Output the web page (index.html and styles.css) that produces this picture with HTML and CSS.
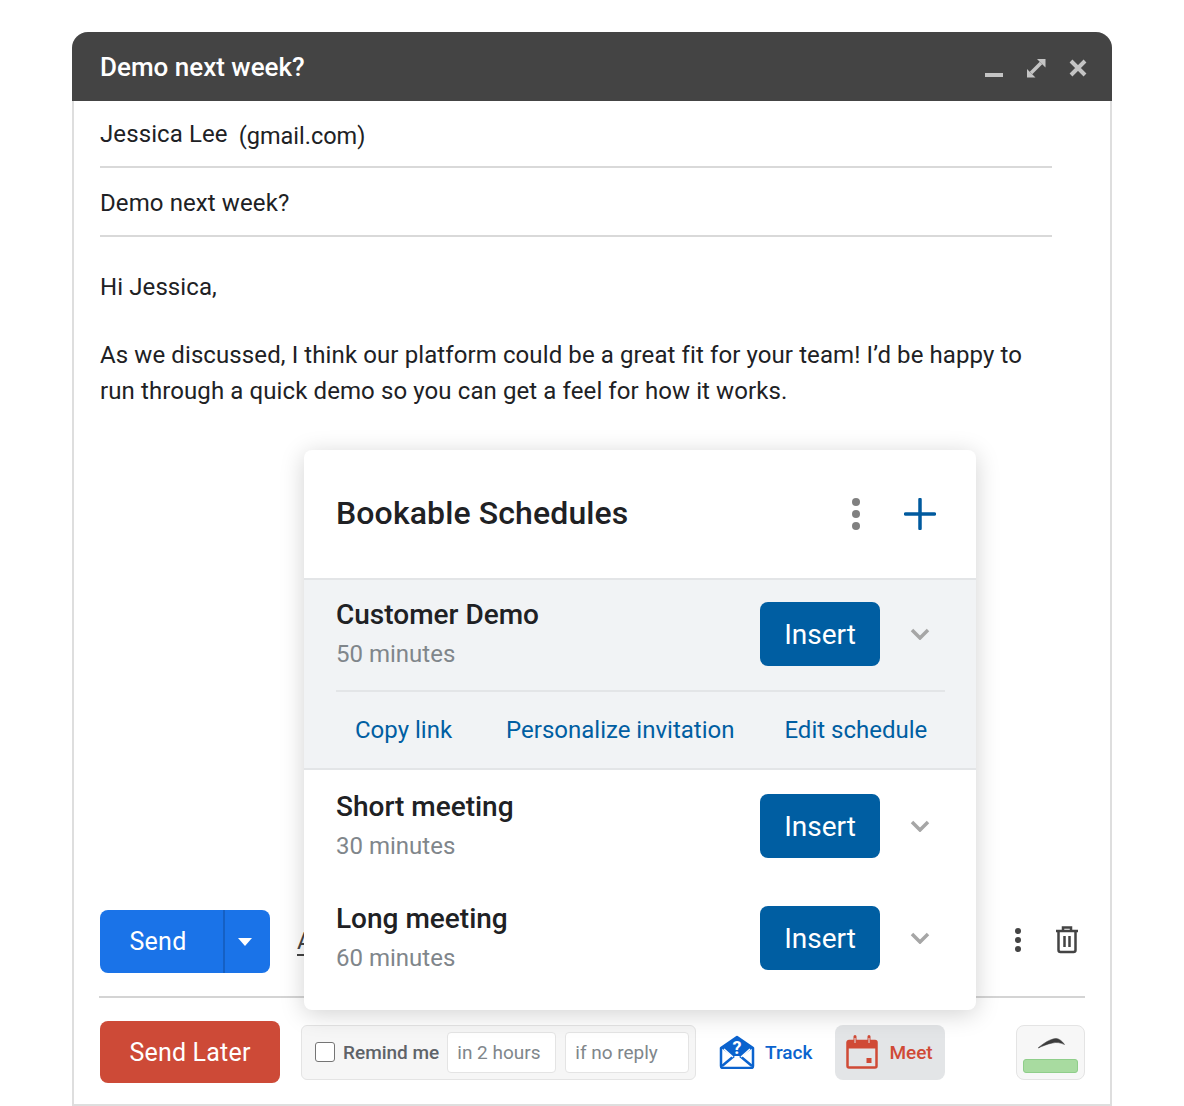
FILE: index.html
```html
<!DOCTYPE html>
<html lang="en">
<head>
<meta charset="utf-8">
<title>Demo next week?</title>
<link rel="stylesheet" href="styles.css">
</head>
<body>
<main class="compose">
  <header class="titlebar">
    <h1 class="titlebar-text">Demo next week?</h1>
    <div class="window-controls">
      <svg class="wc" width="24" height="24" viewBox="0 0 24 24"><rect x="3" y="17" width="18" height="4" fill="#c4c4c4"/></svg>
      <svg class="wc" width="24" height="24" viewBox="0 0 24 24"><path d="M7 17L17 7" stroke="#c4c4c4" stroke-width="3.500"/><path d="M13 3h8.500v8.500zM3 13v8.500h8.500z" fill="#c4c4c4"/></svg>
      <svg class="wc" width="24" height="24" viewBox="0 0 24 24"><path d="M5 5l14 14M19 5L5 19" stroke="#c4c4c4" stroke-width="4" fill="none"/></svg>
    </div>
  </header>
  <div class="field field-to"><span>Jessica Lee</span><span class="domain">(gmail.com)</span></div>
  <div class="field field-subject">Demo next week?</div>
  <div class="message">
    <p>Hi Jessica,</p>
    <p>As we discussed, I think our platform could be a great fit for your team! I’d be happy to run through a quick demo so you can get a feel for how it works.</p>
  </div>
  <footer class="footer">
    <div class="toolbar">
      <div class="send-split">
        <span class="send-main">Send</span>
        <span class="send-more"><svg width="14" height="8" viewBox="0 0 14 8"><path d="M0 0h14L7 8z" fill="#fff"/></svg></span>
      </div>
      <span class="format-a">A</span>
      <div class="toolbar-right">
        <svg width="8" height="26" viewBox="0 0 8 26"><circle cx="4" cy="4" r="3" fill="#444"/><circle cx="4" cy="13" r="3" fill="#444"/><circle cx="4" cy="22" r="3" fill="#444"/></svg>
        <svg width="24" height="28" viewBox="0 0 24 28"><path d="M1 5h22M8 4V1.500h8V4" stroke="#444" stroke-width="2.500" fill="none"/><path d="M3.500 5.500v18.500a2 2 0 0 0 2 2h13a2 2 0 0 0 2-2V5.500" stroke="#444" stroke-width="2.500" fill="none"/><path d="M9.500 10v11M14.500 10v11" stroke="#444" stroke-width="2.500"/></svg>
      </div>
    </div>
    <div class="extension-bar">
      <span class="send-later">Send Later</span>
      <div class="remind">
        <span class="checkbox"></span>
        <span class="remind-label">Remind me</span>
        <span class="remind-input remind-time">in 2 hours</span>
        <span class="remind-input remind-cond">if no reply</span>
      </div>
      <div class="track">
        <svg width="36" height="34" viewBox="0 0 36 34"><path d="M2 13L18 2l16 11v18a2 2 0 0 1-2 2H4a2 2 0 0 1-2-2z" fill="#fff" stroke="#0b63ce" stroke-width="2.500" stroke-linejoin="round"/><path d="M2 13L18 2l16 11-11 8H13z" fill="#0b63ce"/><path d="M3 31l12-10M33 31L21 21" stroke="#0b63ce" stroke-width="2.500"/><path d="M5 14l9 8M31 14l-9 8" stroke="#fff" stroke-width="1.500"/><text x="18" y="19" class="track-q">?</text></svg>
        <span>Track</span>
      </div>
      <div class="meet">
        <svg width="32" height="34" viewBox="0 0 32 34"><path d="M3 6h26a1.500 1.500 0 0 1 1.500 1.500V31a1.500 1.500 0 0 1-1.500 1.500H3A1.500 1.500 0 0 1 1.500 31V7.500A1.500 1.500 0 0 1 3 6z" fill="none" stroke="#d04a36" stroke-width="2.500"/><path d="M1.500 7h29v6.500h-29z" fill="#d04a36"/><path d="M9 1.500v7M23 1.500v7" stroke="#d04a36" stroke-width="3" stroke-linecap="round"/><path d="M9 3v5M23 3v5" stroke="#e3e5e7" stroke-width="1"/><rect x="20.500" y="23" width="5" height="5" fill="#d04a36"/></svg>
        <span>Meet</span>
      </div>
      <div class="dock">
        <svg class="dock-brow" width="30" height="13" viewBox="0 0 30 13"><path d="M2 12C8 7 14 3 20 2.500c3 0 6 2.500 8.500 6-4.500-2-8-2.500-12-1.500C11 8 7 10 2 12z" fill="#3c3c3c" stroke="#3c3c3c" stroke-width=".5"/></svg>
        <span class="dock-bar"></span>
      </div>
    </div>
  </footer>

  <section class="schedules">
    <div class="schedules-head">
      <h2>Bookable Schedules</h2>
      <svg class="more" width="10" height="34" viewBox="0 0 10 34"><circle cx="5" cy="5" r="4" fill="#808080"/><circle cx="5" cy="17" r="4" fill="#808080"/><circle cx="5" cy="29" r="4" fill="#808080"/></svg>
      <svg class="add" width="32" height="32" viewBox="0 0 32 32"><path d="M16 1.500v29M1.500 16h29" stroke="#005a9e" stroke-width="3.500" stroke-linecap="round"/></svg>
    </div>
    <div class="active-block">
      <div class="row row-active">
        <div class="row-text"><div class="row-title">Customer Demo</div><div class="row-sub">50 minutes</div></div>
        <span class="insert">Insert</span>
        <svg class="chevron" width="20" height="12" viewBox="0 0 20 12"><path d="M2 2l8 8 8-8" fill="none" stroke="#a6a6a6" stroke-width="3.500"/></svg>
      </div>
      <div class="links">
        <a class="link-copy">Copy link</a>
        <a class="link-personal">Personalize invitation</a>
        <a class="link-edit">Edit schedule</a>
      </div>
    </div>
    <div class="row">
      <div class="row-text"><div class="row-title">Short meeting</div><div class="row-sub">30 minutes</div></div>
      <span class="insert">Insert</span>
      <svg class="chevron" width="20" height="12" viewBox="0 0 20 12"><path d="M2 2l8 8 8-8" fill="none" stroke="#a6a6a6" stroke-width="3.500"/></svg>
    </div>
    <div class="row">
      <div class="row-text"><div class="row-title">Long meeting</div><div class="row-sub">60 minutes</div></div>
      <span class="insert">Insert</span>
      <svg class="chevron" width="20" height="12" viewBox="0 0 20 12"><path d="M2 2l8 8 8-8" fill="none" stroke="#a6a6a6" stroke-width="3.500"/></svg>
    </div>
  </section>
</main>
</body>
</html>
```
FILE: styles.css
```css
* { box-sizing: border-box; }
html, body { margin: 0; background: #fff; }
body { padding: 32px 72px 0; font-family: Roboto, "Liberation Sans", sans-serif; color: #202124; }
p, h1, h2 { margin: 0; }

.compose {
  position: relative;
  display: flex;
  flex-direction: column;
  width: 1040px;
  height: 1074px;
  border: 2px solid #dedede;
  border-top: 0;
  border-radius: 16px 16px 0 0;
}
.titlebar {
  display: flex;
  align-items: center;
  justify-content: space-between;
  height: 69px;
  margin: 0 -2px;
  padding: 0 22px 0 28px;
  background: #444;
  border-radius: 16px 16px 0 0;
}
.titlebar-text { font-size: 26px; font-weight: 500; color: #fff; }
.window-controls { display: flex; gap: 18px; padding-top: 3px; }

.field {
  display: flex;
  align-items: center;
  margin: 0 58px 0 26px;
  font-size: 24px;
  letter-spacing: .1px;
  border-bottom: 2px solid #d9d9d9;
}
.field-to { height: 67px; gap: 11px; }
.field-subject { height: 69px; padding-top: 3px; }
.domain { padding-top: 4px; font-size: 23.500px; letter-spacing: 0; }

.message { padding: 32px 60px 0 26px; font-size: 24px; line-height: 36px; letter-spacing: .1px; }
.message p + p { margin-top: 32px; }

.footer { margin-top: auto; padding: 0 25px 0 25px; }
.toolbar {
  display: flex;
  align-items: center;
  height: 87px;
  padding: 0 0 24px 1px;
  border-bottom: 2px solid #d4d4d4;
}
.send-split { display: flex; width: 170px; height: 63px; border-radius: 8px; overflow: hidden; background: #1a73e8; color: #fff; }
.send-main { width: 123px; display: flex; align-items: center; justify-content: center; padding-right: 7px; font-size: 25px; letter-spacing: .3px; }
.send-more { flex: 1; display: flex; align-items: center; justify-content: center; padding-right: 5px; border-left: 2px solid #1560c4; }
.format-a { margin-left: 27px; font-size: 24px; line-height: 26px; color: #444; border-bottom: 2px solid #444; }
.toolbar-right { margin-left: auto; display: flex; align-items: center; gap: 33px; padding: 0 6px 4px 0; }

.extension-bar { display: flex; align-items: center; height: 106px; padding: 2px 0 0 1px; }
.send-later {
  display: flex; align-items: center; justify-content: center;
  flex: none;
  width: 180px; height: 62px;
  background: #cd4a37; color: #fff;
  border-radius: 8px;
  font-size: 25px; letter-spacing: .2px;
}
.remind {
  display: flex; align-items: center;
  flex: none;
  width: 395px; height: 55px;
  margin-left: 21px; padding: 0 7px 0 13px;
  background: #f6f6f6;
  border: 1px solid #e4e4e4;
  border-radius: 6px;
}
.checkbox { flex: none; width: 20px; height: 20px; border: 1.500px solid #757575; border-radius: 3px; background: #fff; }
.remind-label { flex: none; margin-left: 8px; font-size: 19px; font-weight: 500; color: #5f6368; white-space: nowrap; }
.remind-input {
  display: flex; align-items: center;
  flex: none;
  height: 41px; margin-left: 8px; padding-left: 9px;
  background: #fff;
  border: 1px solid #e4e4e4;
  border-radius: 4px;
  font-size: 19px; color: #80868b;
}
.remind-time { width: 109px; }
.remind-cond { width: 124px; margin-left: 9px; }

.track { display: flex; align-items: center; gap: 10px; margin-left: 23px; color: #0b63ce; font-size: 19px; font-weight: 500; }
.track-q { font: 700 18px Roboto, sans-serif; fill: #fff; text-anchor: middle; }
.meet {
  display: flex; align-items: center; gap: 11px;
  width: 110px; height: 55px;
  margin-left: 23px; padding-left: 11px;
  background: #e3e5e7;
  border-radius: 8px;
  color: #d04a36; font-size: 19px; font-weight: 500;
}
.dock {
  display: flex; flex-direction: column; align-items: center; justify-content: flex-end;
  width: 69px; height: 55px;
  margin-left: auto; padding: 0 6px 6px;
  background: #f7f7f7;
  border: 1px solid #e4e4e4;
  border-radius: 8px;
}
.dock-brow { margin-bottom: 10px; }
.dock-bar { width: 100%; height: 14px; flex: none; background: #a8dba0; border: 1px solid #8fce8a; border-radius: 3px; }

.schedules {
  position: absolute;
  left: 230px;
  top: 418px;
  width: 672px;
  height: 560px;
  background: #fff;
  border-radius: 8px;
  box-shadow: 0 4px 24px rgba(0,0,0,.18);
  overflow: hidden;
}
.schedules-head {
  display: flex; align-items: center;
  height: 130px;
  padding: 0 40px 0 32px;
  border-bottom: 2px solid #e3e5e7;
}
.schedules-head h2 { flex: 1; padding-bottom: 2px; font-size: 32px; font-weight: 500; letter-spacing: .12px; color: #202124; }
.more { margin-right: 43px; }
.active-block { height: 190px; background: #f1f3f5; border-bottom: 2px solid #e3e5e7; }
.row { display: flex; align-items: center; height: 112px; padding: 0 46px 0 32px; }
.row-active { height: 112px; margin: 0 31px 0 32px; padding: 0 15px 2px 0; border-bottom: 2px solid #e3e5e7; }
.row-text { flex: 1; padding-top: 2px; }
.row-title { font-size: 28px; font-weight: 500; line-height: 38px; color: #202124; }
.row-sub { font-size: 24px; line-height: 40px; color: #80868b; }
.row-active .row-text { padding-top: 0; }
.row-active .row-title { line-height: 39px; }
.insert {
  display: flex; align-items: center; justify-content: center;
  width: 120px; height: 64px;
  background: #005ea2; color: #fff;
  border-radius: 8px;
  font-size: 28px;
}
.chevron { margin-left: 30px; }
.links { display: flex; align-items: center; height: 76px; font-size: 24px; color: #005ea2; }
.link-copy { margin-left: 51px; }
.link-personal { margin-left: 54px; }
.link-edit { margin-left: 50px; }
```
